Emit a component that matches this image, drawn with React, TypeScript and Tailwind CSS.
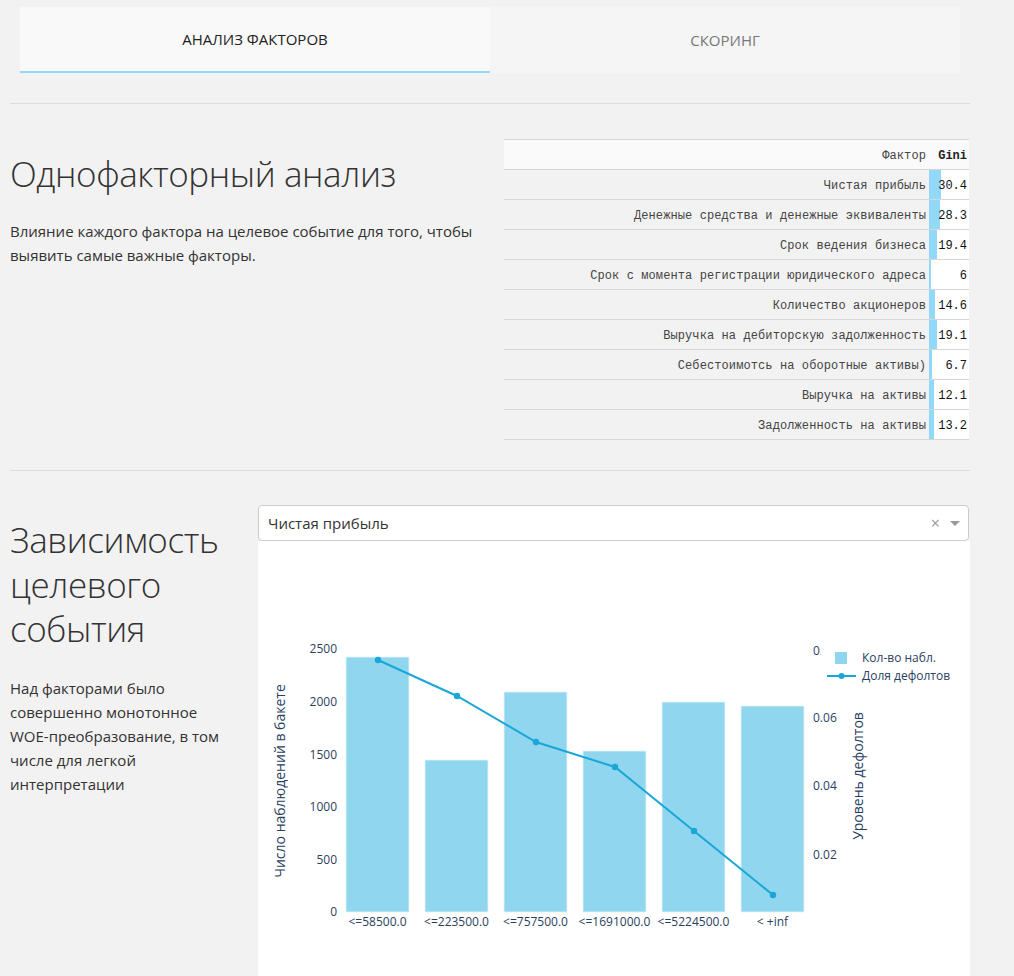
import React from "react";

const rows: [string, string, number][] = [
  ["Чистая прибыль", "30.4", 30.4],
  ["Денежные средства и денежные эквиваленты", "28.3", 28.3],
  ["Срок ведения бизнеса", "19.4", 19.4],
  ["Срок с момента регистрации юридического адреса", "6", 6],
  ["Количество акционеров", "14.6", 14.6],
  ["Выручка на дебиторскую задолженность", "19.1", 19.1],
  ["Себестоимотсь на оборотные активы)", "6.7", 6.7],
  ["Выручка на активы", "12.1", 12.1],
  ["Задолженность на активы", "13.2", 13.2],
];

const bars = [
  { x: 88, top: 114, label: "<=58500.0" },
  { x: 167, top: 217, label: "<=223500.0" },
  { x: 246, top: 149, label: "<=757500.0" },
  { x: 325, top: 208, label: "<=1691000.0" },
  { x: 404, top: 159, label: "<=5224500.0" },
  { x: 483, top: 163, label: "< +inf" },
];
const pts: [number, number][] = [
  [120, 117],
  [199, 153],
  [278, 199],
  [357, 224],
  [436, 288],
  [515, 352],
];
const leftTicks: [string, number][] = [
  ["2500", 106],
  ["2000", 159],
  ["1500", 212],
  ["1000", 264],
  ["500", 317],
  ["0", 369],
];
const rightTicks: [string, number][] = [
  ["0.06", 175],
  ["0.04", 243],
  ["0.02", 312],
];

function Chart() {
  const font = { fontFamily: "'Open Sans', sans-serif" };
  return (
    <svg width="712" height="434" viewBox="0 0 712 434" style={font}>
      {bars.map((b) => (
        <rect
          key={b.x}
          x={b.x}
          y={b.top}
          width={63}
          height={369 - b.top}
          fill="#8fd6ee"
          stroke="#e6f5fb"
          strokeWidth={0.8}
        />
      ))}
      <polyline
        points={pts.map((p) => p.join(",")).join(" ")}
        fill="none"
        stroke="#1aa7d8"
        strokeWidth={2}
      />
      {pts.map((p) => (
        <circle key={p[0]} cx={p[0]} cy={p[1]} r={3.2} fill="#1aa7d8" />
      ))}
      {leftTicks.map(([t, y]) => (
        <text key={t} x={79} y={y + 4} textAnchor="end" fontSize={12} fill="#2a3f5f">
          {t}
        </text>
      ))}
      <text x={555} y={112} fontSize={12} fill="#2a3f5f">
        0.08
      </text>
      {rightTicks.map(([t, y]) => (
        <text key={t} x={555} y={y + 4} fontSize={12} fill="#2a3f5f">
          {t}
        </text>
      ))}
      {bars.map((b) => (
        <text key={b.label} x={b.x + 31.5} y={383} textAnchor="middle" fontSize={12} fill="#2a3f5f">
          {b.label}
        </text>
      ))}
      <text
        transform="translate(27,238) rotate(-90)"
        textAnchor="middle"
        fontSize={14}
        fill="#2a3f5f"
      >
        Число наблюдений в бакете
      </text>
      <text
        transform="translate(605,233) rotate(-90)"
        textAnchor="middle"
        fontSize={14}
        fill="#2a3f5f"
      >
        Уровень дефолтов
      </text>
      <rect x={563} y={100} width={140} height={44} fill="#ffffff" />
      <rect x={577} y={109} width={12} height={12} fill="#8fd6ee" />
      <text x={604} y={119} fontSize={12} fill="#2a3f5f">
        Кол-во набл.
      </text>
      <line x1={569} y1={133} x2={598} y2={133} stroke="#1aa7d8" strokeWidth={2} />
      <circle cx={583.5} cy={133} r={3} fill="#1aa7d8" />
      <text x={604} y={137} fontSize={12} fill="#2a3f5f">
        Доля дефолтов
      </text>
    </svg>
  );
}

export default function App() {
  return (
    <div
      className="min-h-[976px] bg-[#f2f2f2] text-[#333]"
      style={{ fontFamily: "'Open Sans', 'Noto Sans', sans-serif" }}
    >
      <div className="w-[960px] ml-[10px] pt-[7px]">
        {/* Tabs */}
        <div className="mx-[10px] flex h-[66px]">
          <div className="flex-1 bg-[#f9f9f9] border-b-2 border-[#92d8f8] flex items-center justify-center text-[15px] text-[#222]">
            АНАЛИЗ ФАКТОРОВ
          </div>
          <div className="flex-1 bg-[#f5f5f5] flex items-center justify-center text-[15px] text-[#777]">
            СКОРИНГ
          </div>
        </div>
        <div className="mt-[30px] border-t border-[#dcdcdc]" />

        {/* Section 1 */}
        <div className="flex pt-[35px] pb-[30px]">
          <div className="flex-1 pt-[11px]">
            <h1 className="text-[35px] font-light leading-[48px] text-[#333] tracking-[-0.4px]">
              Однофакторный анализ
            </h1>
            <p className="mt-[21px] text-[15px] leading-[24px] text-[#333] w-[470px]">
              Влияние каждого фактора на целевое событие для того, чтобы выявить самые важные факторы.
            </p>
          </div>
          <div
            className="w-[465px] mr-px border-t border-[#d6d6d6] text-[12px] text-[#444] tracking-[0.1px]"
            style={{ fontFamily: "'Liberation Mono', 'Courier New', monospace" }}
          >
            <div className="flex h-[30px] border-b border-[#d6d6d6] bg-[#fafafa] pt-[2px]">
              <div className="flex-1 flex items-center justify-end pr-[3px]">Фактор</div>
              <div className="w-[40px] flex items-center justify-end pr-[2px] font-bold text-[#222] tracking-normal">
                Gini
              </div>
            </div>
            {rows.map(([name, val, v]) => (
              <div key={name} className="flex h-[30px] border-b border-[#d6d6d6] bg-[#f2f2f2]">
                <div className="flex-1 flex items-center justify-end pr-[3px] whitespace-nowrap pt-[2px]">
                  {name}
                </div>
                <div
                  className="w-[40px] flex items-center justify-end pr-[2px] pt-[2px] text-[#111] tracking-normal"
                  style={{
                    background: `linear-gradient(90deg, #92d8f8 0%, #92d8f8 ${v}%, #ffffff ${v}%, #ffffff 100%)`,
                  }}
                >
                  {val}
                </div>
              </div>
            ))}
          </div>
        </div>
        <div className="border-t border-[#dcdcdc]" />

        {/* Section 2 */}
        <div className="flex pt-[34px]">
          <div className="w-[248px] pt-[13px]">
            <h2 className="text-[35px] font-light leading-[44.5px] text-[#333] tracking-[-0.4px]">
              Зависимость целевого события
            </h2>
            <p className="mt-[24px] text-[15px] leading-[24px] text-[#333] w-[220px]">
              Над факторами было совершенно монотонное WOE-преобразование, в том числе для легкой интерпретации
            </p>
          </div>
          <div className="flex-1">
            <div className="h-[36px] bg-white border border-[#ccc] rounded-[4px] flex items-center pl-[9px] pr-[8px] mr-px">
              <span className="flex-1 text-[15px] text-[#333]">Чистая прибыль</span>
              <span className="text-[#999] text-[16px] leading-none mr-[10px]">×</span>
              <span className="w-0 h-0 border-l-[5px] border-r-[5px] border-t-[5px] border-l-transparent border-r-transparent border-t-[#999]" />
            </div>
            <div className="bg-white h-[440px] pt-[2px]">
              <Chart />
            </div>
          </div>
        </div>
      </div>
    </div>
  );
}
